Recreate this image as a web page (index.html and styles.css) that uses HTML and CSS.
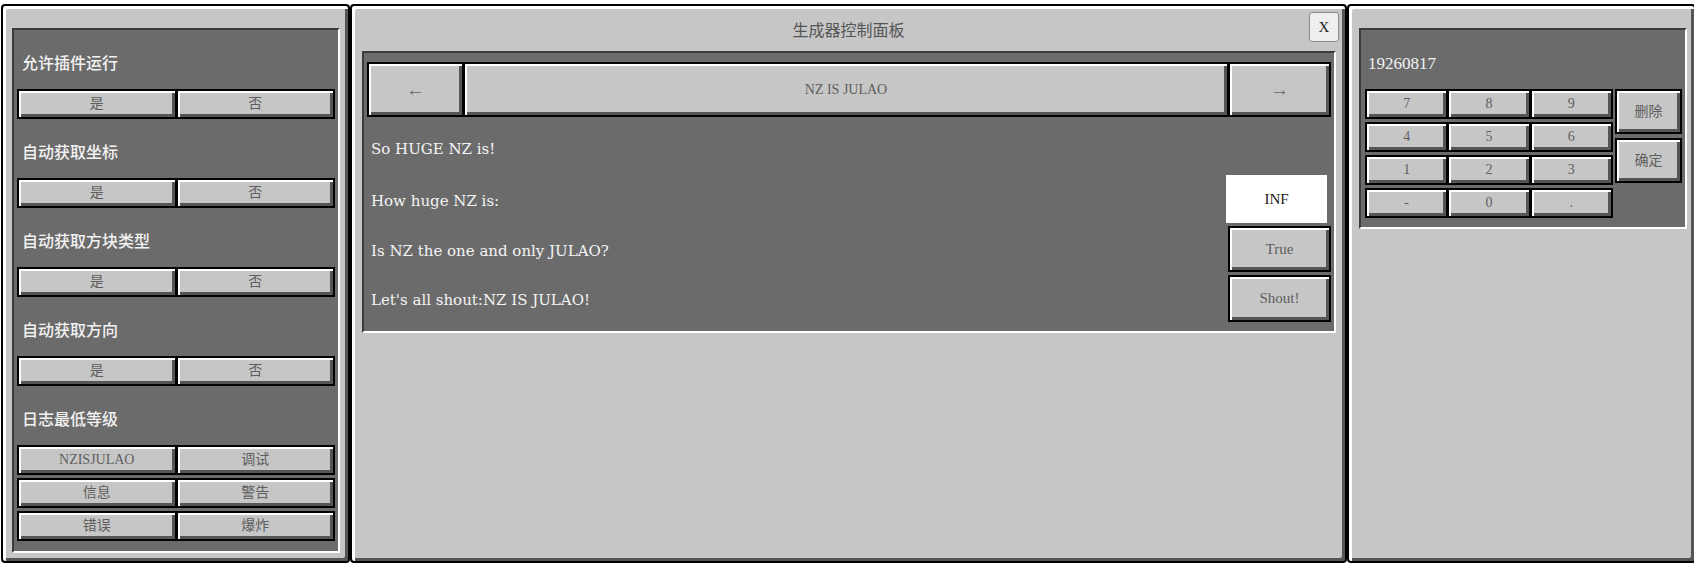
FILE: index.html
```html
<!DOCTYPE html>
<html lang="zh-CN">
<head>
<meta charset="utf-8">
<title>生成器控制面板</title>
<link rel="stylesheet" href="styles.css">
</head>
<body>
<div class="desk">
  <section class="panel panel-left">
    <div class="slot slot-left">
      <div class="label">允许插件运行</div>
      <div class="btnrow"><button class="btn">是</button><button class="btn">否</button></div>
      <div class="label">自动获取坐标</div>
      <div class="btnrow"><button class="btn">是</button><button class="btn">否</button></div>
      <div class="label">自动获取方块类型</div>
      <div class="btnrow"><button class="btn">是</button><button class="btn">否</button></div>
      <div class="label">自动获取方向</div>
      <div class="btnrow"><button class="btn">是</button><button class="btn">否</button></div>
      <div class="label">日志最低等级</div>
      <div class="btnrow"><button class="btn">NZISJULAO</button><button class="btn">调试</button></div>
      <div class="btnrow stacked"><button class="btn">信息</button><button class="btn">警告</button></div>
      <div class="btnrow stacked"><button class="btn">错误</button><button class="btn">爆炸</button></div>
    </div>
  </section>

  <section class="panel panel-main">
    <header class="main-head">
      <span class="head-spacer"></span>
      <h1 class="title">生成器控制面板</h1>
      <button class="close">X</button>
    </header>
    <div class="slot slot-main">
      <div class="nav">
        <button class="btn nav-prev">←</button>
        <button class="btn nav-mid">NZ IS JULAO</button>
        <button class="btn nav-next">→</button>
      </div>
      <div class="row row-first"><span class="row-text">So HUGE NZ is!</span></div>
      <div class="row row-inf"><span class="row-text">How huge NZ is:</span><div class="field">INF</div></div>
      <div class="row row-true"><span class="row-text">Is NZ the one and only JULAO?</span><button class="btn ctrl">True</button></div>
      <div class="row row-shout"><span class="row-text">Let's all shout:NZ IS JULAO!</span><button class="btn ctrl">Shout!</button></div>
    </div>
  </section>

  <section class="panel panel-right">
    <div class="slot slot-right">
      <div class="label label-num">19260817</div>
      <div class="keypad">
        <div class="keys">
          <div class="btnrow"><button class="btn key">7</button><button class="btn key">8</button><button class="btn key">9</button></div>
          <div class="btnrow stacked"><button class="btn key">4</button><button class="btn key">5</button><button class="btn key">6</button></div>
          <div class="btnrow stacked"><button class="btn key">1</button><button class="btn key">2</button><button class="btn key">3</button></div>
          <div class="btnrow stacked"><button class="btn key">-</button><button class="btn key">0</button><button class="btn key">.</button></div>
        </div>
        <div class="side">
          <button class="btn side-btn">删除</button>
          <button class="btn side-btn">确定</button>
        </div>
      </div>
    </div>
  </section>
</div>
</body>
</html>
```

FILE: styles.css
```css
* { box-sizing: border-box; }

html, body {
  margin: 0;
  padding: 0;
  background: #ffffff;
  overflow: hidden;
}

body {
  font-family: "Liberation Serif", "Noto Sans CJK SC", serif;
  color: #222;
}

.desk {
  display: flex;
  align-items: flex-start;
  width: 1694px;
  height: 567px;
  padding: 4px 0 0 1px;
  overflow: hidden;
}

.panel {
  flex: none;
  height: 559px;
  border: 2px solid #000;
  border-radius: 4px;
  background: #c6c6c6;
  box-shadow: inset 3px 3px 0 #ffffff, inset -3px -3px 0 #555555;
}

.panel-left { width: 349px; padding: 22px 8px 8px 9px; }
.panel-main { width: 997px; padding: 0 9px 0 10px; display: flex; flex-direction: column; }
.panel-right { width: 349px; padding: 22px 8px 8px 10px; }

.slot {
  background: #6b6b6b;
  border: 2px solid;
  border-color: #3c3c3c #ffffff #ffffff #3c3c3c;
}

.slot-left { width: 328px; padding: 0 3px 10px 3px; }
.slot-right { width: 328px; padding: 0 3px 9px 4px; }

.label {
  height: 59px;
  display: flex;
  align-items: center;
  padding: 4px 0 0 5px;
  color: #f2f2f2;
  font-family: "Noto Sans CJK SC", sans-serif;
  font-size: 16px;
  font-weight: 500;
}

.label-num {
  padding: 8px 0 0 3px;
  font-family: "Liberation Serif", serif;
  font-size: 17px;
  font-weight: 400;
}

.btnrow {
  display: flex;
  height: 30px;
}

.btnrow.stacked { margin-top: 3px; }

.btn {
  flex: 1 1 0;
  min-width: 0;
  height: 100%;
  margin: 0;
  padding: 0;
  border: 2px solid #000;
  border-radius: 0;
  background: #c6c6c6;
  box-shadow: inset 2px 2px 0 #ffffff, inset -3px -3px 0 #555555;
  color: #5e5e5e;
  font-family: "Liberation Serif", "Noto Sans CJK SC", serif;
  font-size: 14px;
  line-height: 1;
  text-align: center;
  cursor: pointer;
  -webkit-appearance: none;
  appearance: none;
}

.btnrow .btn + .btn { border-left-width: 1px; }

/* main panel */
.main-head {
  height: 45px;
  margin: 0 -9px 0 -10px;
  display: grid;
  grid-template-columns: 1fr auto 1fr;
  align-items: center;
}

.title {
  margin: 0;
  font-family: "Noto Sans CJK SC", sans-serif;
  font-size: 16px;
  font-weight: 400;
  color: #555555;
  line-height: 1;
}

.close {
  justify-self: end;
  align-self: start;
  width: 30px;
  height: 30px;
  margin: 6px 6px 0 0;
  padding: 0;
  background: #efefef;
  border: 1px solid #8a8a8a;
  border-radius: 3px;
  font-family: "Liberation Serif", serif;
  font-size: 15px;
  color: #222;
}

.slot-main {
  width: 974px;
  height: 282px;
  padding: 9px 3px 9px 3px;
}

.nav {
  display: flex;
  height: 55px;
}

.nav .btn { height: 55px; }
.nav-prev { flex: 0 0 97px; font-size: 19px; color: #666; }
.nav-mid { flex: 1 1 0; }
.nav-next { flex: 0 0 102px; font-size: 19px; color: #666; }
.nav .btn + .btn { border-left-width: 1px; }

.row {
  display: flex;
  align-items: center;
  justify-content: space-between;
}

.row-first { height: 55px; margin-top: 3px; }
.row-inf { height: 48px; }
.row-true { height: 46px; margin-top: 3px; }
.row-shout { height: 47px; margin-top: 3px; }

.row-text {
  padding: 3px 0 0 4px;
  color: #f4f4f4;
  font-family: "DejaVu Serif", serif;
  font-size: 15px;
}

.field {
  width: 101px;
  height: 48px;
  margin-right: 4px;
  background: #ffffff;
  color: #222;
  font-size: 15px;
  display: flex;
  align-items: center;
  justify-content: center;
}

.ctrl {
  flex: 0 0 103px;
  font-size: 15px;
}

/* keypad */
.keypad {
  display: flex;
  gap: 2px;
}

.keys { flex: 0 0 248px; }

.key { font-size: 14px; }

.side {
  flex: 0 0 67px;
  display: flex;
  flex-direction: column;
  gap: 4px;
}

.side-btn {
  flex: 0 0 45px;
  height: 45px;
  font-size: 14px;
}
```
